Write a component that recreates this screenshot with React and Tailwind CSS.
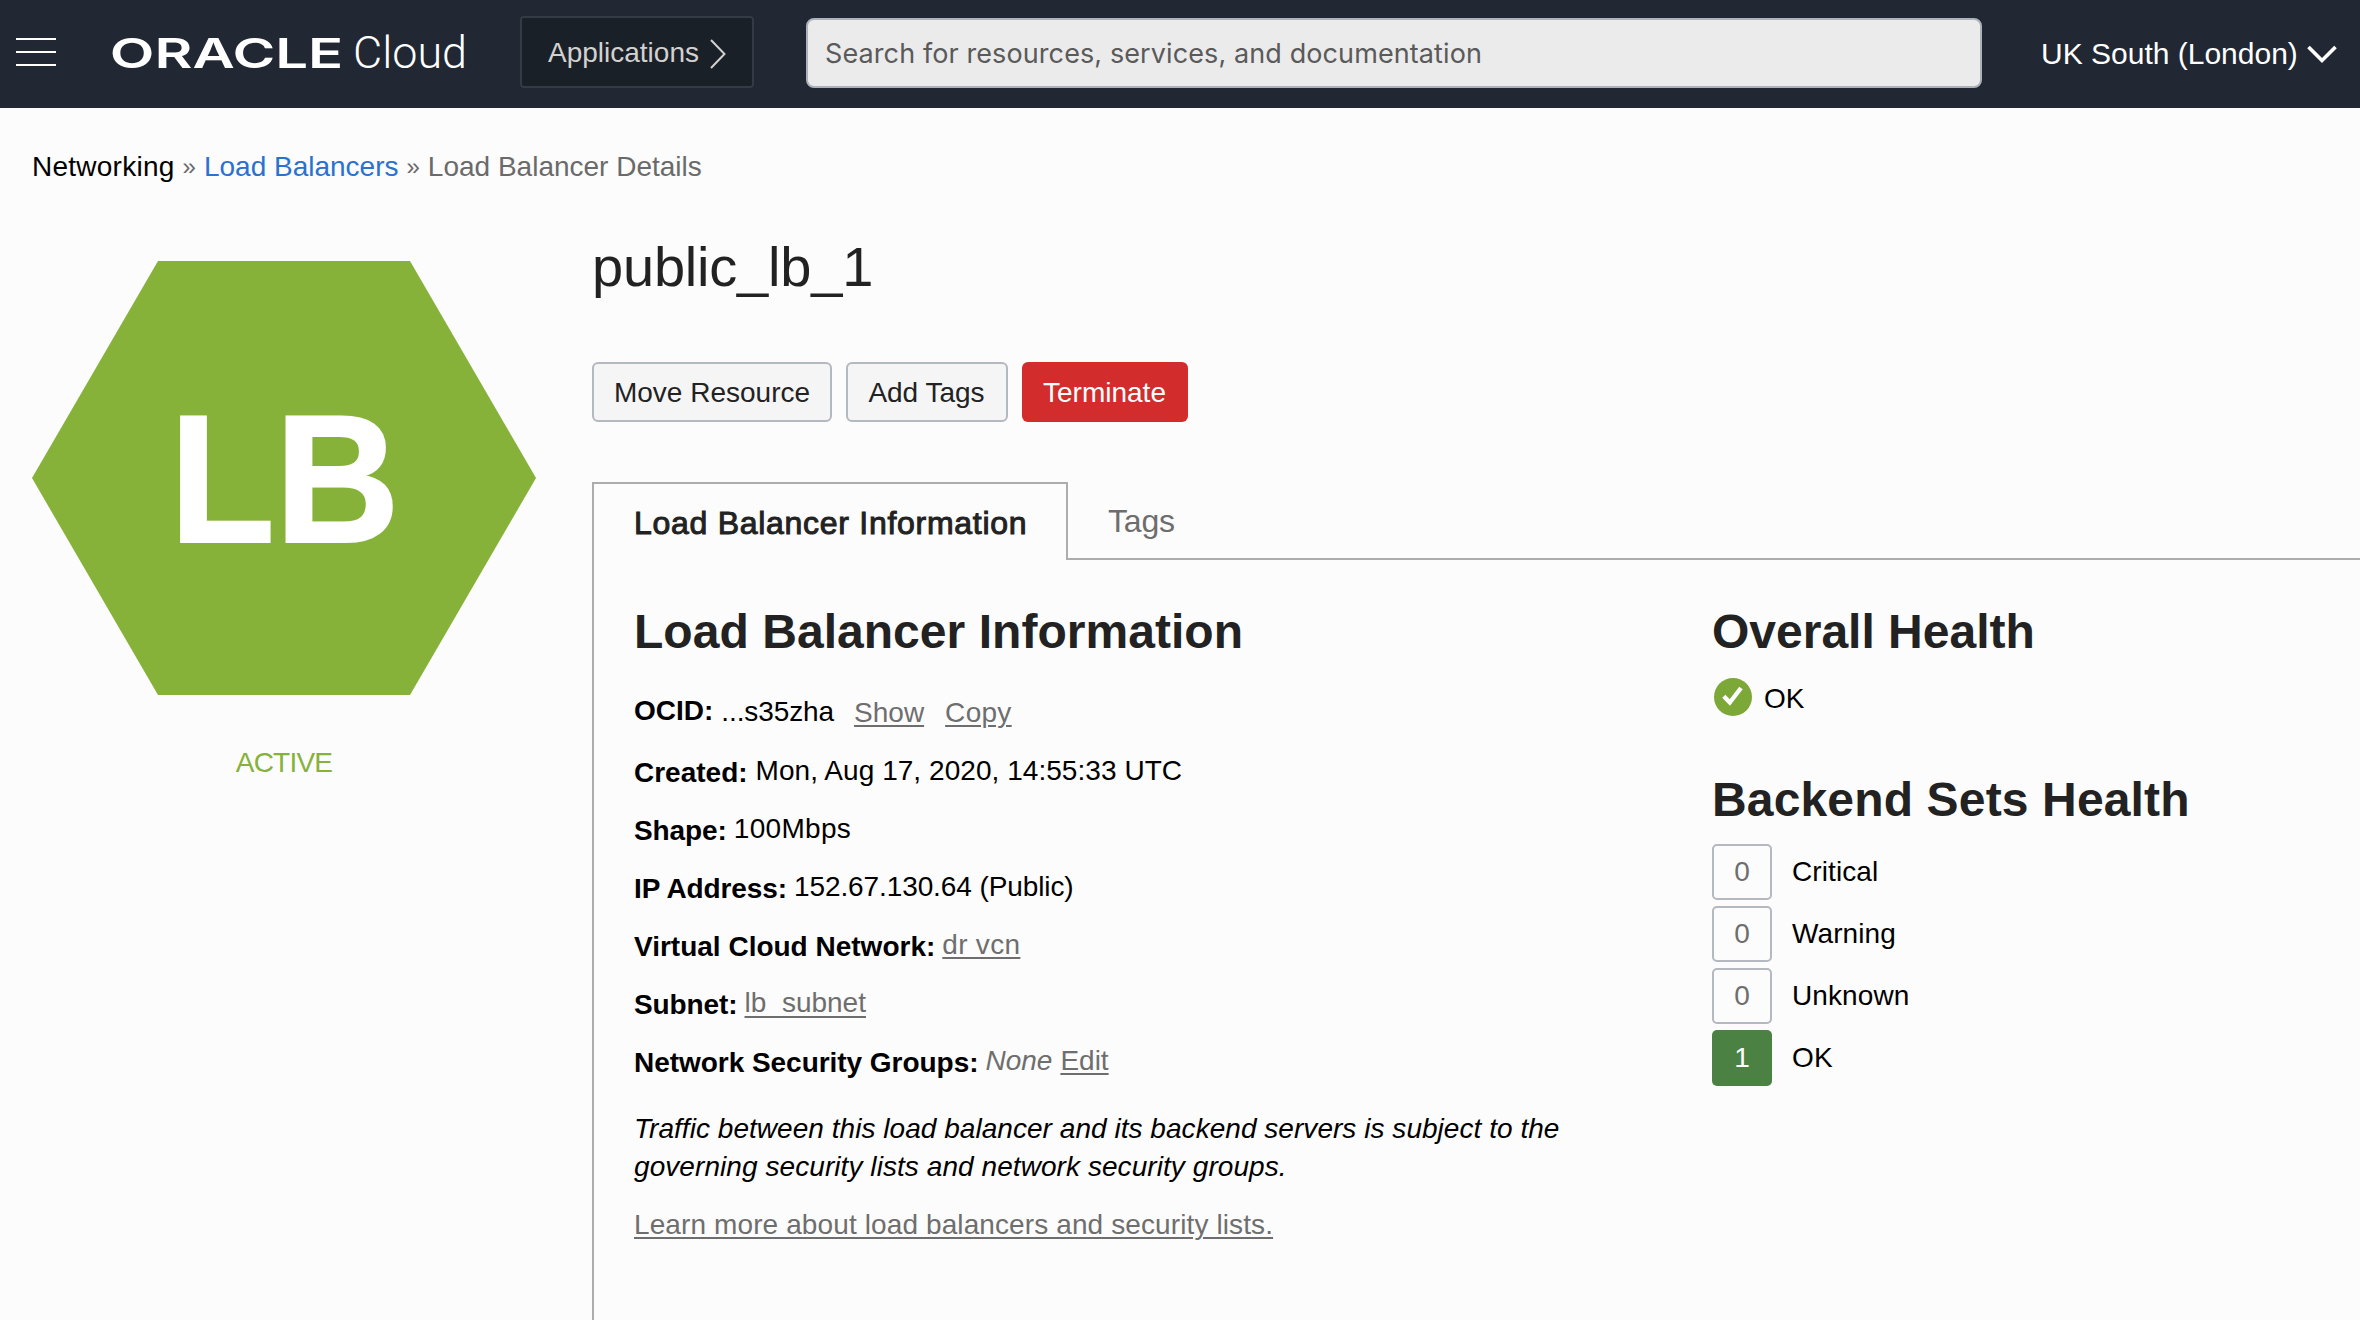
import React from "react";

const LINK =
  "text-[#6e6e6e] underline decoration-2 underline-offset-[3px]";

function Header() {
  return (
    <header className="flex h-[108px] w-full shrink-0 bg-[#212733]">
      <button className="ml-4 mt-[38px] flex h-7 w-10 flex-col justify-between" aria-label="Menu">
        <span className="h-0.5 w-10 bg-white" />
        <span className="h-0.5 w-10 bg-white" />
        <span className="h-0.5 w-10 bg-white" />
      </button>

      <svg className="ml-[54px] h-[108px] w-[370px] shrink-0" viewBox="110 0 370 108" fill="#ffffff">
        <text
          x="109.8"
          y="68"
          fontFamily="Inter, sans-serif"
          fontWeight="600"
          fontSize="41.5"
          textLength="233.5"
          lengthAdjust="spacingAndGlyphs"
        >
          ORACLE
        </text>
        <text
          x="353"
          y="68"
          fontFamily="Roboto, sans-serif"
          fontWeight="300"
          fontSize="44"
          textLength="114"
          lengthAdjust="spacingAndGlyphs"
        >
          Cloud
        </text>
      </svg>

      <button className="ml-10 mt-4 flex h-[72px] w-[234px] shrink-0 items-center rounded-[4px] border-2 border-[#343b45] bg-[#1a2028] pl-[26px] pt-px text-[28px] leading-10 text-[#d3d1cf]">
        Applications
        <svg className="ml-[10px] h-8 w-[18px]" viewBox="0 0 18 32" fill="none" stroke="#d3d1cf" strokeWidth="2">
          <path d="M2 3 L15.5 17 L2 31" />
        </svg>
      </button>

      <div className="ml-[52px] mt-[18px] flex h-[70px] w-[1176px] shrink-0 items-center rounded-lg border-2 border-[#abb2ba] bg-[#ebebeb] pl-[17px] pt-[3px] font-['Inter',sans-serif] text-[27px] tracking-[0.1px] text-[#5a5a5a]">
        Search for resources, services, and documentation
      </div>

      <div className="ml-[59px] mt-[34px] flex h-10 items-center whitespace-nowrap text-[30px] leading-10 text-white">
        UK South (London)
        <svg className="ml-2 h-5 w-8" viewBox="0 0 32 20" fill="none" stroke="#ffffff" strokeWidth="3.6">
          <path d="M2.5 3 L16 16.5 L29.5 3" />
        </svg>
      </div>
    </header>
  );
}

function Breadcrumb() {
  return (
    <nav className="ml-8 mt-[39px] flex h-10 shrink-0 gap-[8px] text-[28px] leading-10 text-[#6a6a6a]">
      <span className="tracking-[0.25px] text-black">Networking</span>
      <span className="text-2xl leading-10">»</span>
      <span className="text-[#2a71d0]">Load Balancers</span>
      <span className="text-2xl leading-10">»</span>
      <span>Load Balancer Details</span>
    </nav>
  );
}

function Status() {
  return (
    <aside className="ml-8 w-[504px] shrink-0 pt-[74px]">
      <svg className="block h-[434px] w-[504px]" viewBox="0 0 504 434">
        <path d="M0 217 L126 0 H378 L504 217 L378 434 H126 Z" fill="#86b23a" />
        <text
          x="137.5"
          y="280.5"
          fill="#ffffff"
          stroke="#ffffff"
          strokeWidth="2"
          fontFamily="Liberation Sans, sans-serif"
          fontWeight="700"
          fontSize="182.5"
          textLength="230"
          lengthAdjust="spacingAndGlyphs"
        >
          LB
        </text>
      </svg>
      <div className="mt-12 text-center text-[28px] leading-10 tracking-[-0.8px] text-[#86b23a]">
        ACTIVE
      </div>
    </aside>
  );
}

function Row({ label, labelClass = "", children }) {
  return (
    <div className="mb-[18px] flex h-10 gap-[7px] whitespace-nowrap">
      <span className={`mt-0.5 font-bold ${labelClass}`}>{label}</span>
      {children}
    </div>
  );
}

function Information() {
  return (
    <section className="w-[1077px] shrink-0 text-[28px] leading-10 text-black">
      <h2 className="text-[48px] font-bold leading-[56px] tracking-[0.04px] text-[#222222]">
        Load Balancer Information
      </h2>
      <div className="mb-5 mt-[31px] flex h-10 whitespace-nowrap">
        <span className="font-bold">OCID:</span>
        <span className="ml-2 mt-px tracking-[-0.1px]">...s35zha</span>
        <a className={`ml-5 mt-0.5 ${LINK}`}>Show</a>
        <a className={`ml-[21px] mt-0.5 tracking-[0.3px] ${LINK}`}>Copy</a>
      </div>
      <Row label="Created:">
        <span className="ml-px tracking-[0.05px]">Mon, Aug 17, 2020, 14:55:33 UTC</span>
      </Row>
      <Row label="Shape:" labelClass="tracking-[-0.1px]">
        <span className="tracking-[0.3px]">100Mbps</span>
      </Row>
      <Row label="IP Address:" labelClass="tracking-[-0.1px]">
        <span className="tracking-[-0.1px]">152.67.130.64 (Public)</span>
      </Row>
      <Row label="Virtual Cloud Network:">
        <a className={`tracking-[0.3px] ${LINK}`}>dr vcn</a>
      </Row>
      <Row label="Subnet:" labelClass="tracking-[-0.1px]">
        <a className="text-[#6e6e6e] underline decoration-2 underline-offset-[4px] [text-decoration-skip-ink:none]">
          lb_subnet
        </a>
      </Row>
      <Row label="Network Security Groups:" labelClass="tracking-[-0.04px]">
        <span className="italic text-[#6e6e6e]">None</span>
        <a className={`ml-px ${LINK}`}>Edit</a>
      </Row>
      <p className="mt-[29px] whitespace-nowrap italic leading-[38px]">
        <span className="tracking-[0.04px]">
          Traffic between this load balancer and its backend servers is subject to the
        </span>
        <br />
        <span className="tracking-[0.07px]">governing security lists and network security groups.</span>
      </p>
      <a className={`mt-[19px] block w-fit tracking-[0.11px] ${LINK}`}>
        Learn more about load balancers and security lists.
      </a>
    </section>
  );
}

const BACKEND = [
  { count: 0, label: "Critical" },
  { count: 0, label: "Warning" },
  { count: 0, label: "Unknown" },
  { count: 1, label: "OK" },
];

function Health() {
  return (
    <section className="text-[28px] leading-10 text-black">
      <h2 className="ml-px text-[48px] font-bold leading-[56px] text-[#222222]">Overall Health</h2>
      <div className="mt-[18px] flex h-[38px] items-center">
        <svg className="ml-[3px] h-[38px] w-[38px]" viewBox="0 0 38 38">
          <circle cx="19" cy="19" r="19" fill="#7ba836" />
          <path d="M9.8 18.2 L15.8 24.5 L27 10" fill="none" stroke="#ffffff" strokeWidth="4.4" />
        </svg>
        <span className="ml-3 mt-[3px]">OK</span>
      </div>
      <h2 className="ml-px mt-14 whitespace-nowrap text-[48px] font-bold leading-[56px] tracking-[0.15px] text-[#222222]">
        Backend Sets Health
      </h2>
      <ul className="ml-px mt-4 flex flex-col gap-1.5">
        {BACKEND.map(({ count, label }) => (
          <li key={label} className="flex h-14 items-center gap-5">
            <span
              className={
                count
                  ? "flex h-14 w-[60px] items-center justify-center rounded-[5px] bg-[#4b8244] text-white"
                  : "flex h-14 w-[60px] items-center justify-center rounded-[5px] border-2 border-[#b4b8c0] text-[#6e6e6e]"
              }
            >
              {count}
            </span>
            <span className="tracking-[0.1px]">{label}</span>
          </li>
        ))}
      </ul>
    </section>
  );
}

function Details() {
  return (
    <main className="ml-14 flex min-w-0 flex-1 flex-col">
      <h1 className="mt-12 text-[56px] leading-[64px] tracking-[-0.2px] text-[#222222]">public_lb_1</h1>
      <div className="mt-[63px] flex shrink-0 gap-[14px] text-[28px] leading-10 text-[#222222]">
        <button className="h-[60px] w-60 rounded-md border-2 border-[#b4b8c0] bg-[#f5f5f5] pt-0.5">Move Resource</button>
        <button className="h-[60px] w-[162px] rounded-md border-2 border-[#b4b8c0] bg-[#f5f5f5] pr-px pt-0.5">
          Add Tags
        </button>
        <button className="h-[60px] w-[166px] rounded-md bg-[#d32c2c] pr-px pt-0.5 text-white">Terminate</button>
      </div>
      <div className="mt-[60px] flex h-[78px] shrink-0 text-[32px] leading-10">
        <div className="w-[476px] shrink-0 whitespace-nowrap border-x-2 border-t-2 border-[#adadad] pl-10 pt-[19px] tracking-[0.72px] text-[#222222] [-webkit-text-stroke:1px_#222222]">
          Load Balancer Information
        </div>
        <div className="flex-1 border-b-2 border-[#adadad] pl-10 pt-[19px] tracking-[-0.2px] text-[#6d6d6d]">Tags</div>
      </div>
      <div className="flex flex-1 border-l-2 border-[#adadad] pl-10 pt-11">
        <Information />
        <Health />
      </div>
    </main>
  );
}

export default function App() {
  return (
    <div className="flex h-[1320px] w-[2360px] flex-col overflow-hidden bg-[#fcfcfc] font-['Liberation_Sans',Arial,sans-serif]">
      <Header />
      <Breadcrumb />
      <div className="flex flex-1">
        <Status />
        <Details />
      </div>
    </div>
  );
}
